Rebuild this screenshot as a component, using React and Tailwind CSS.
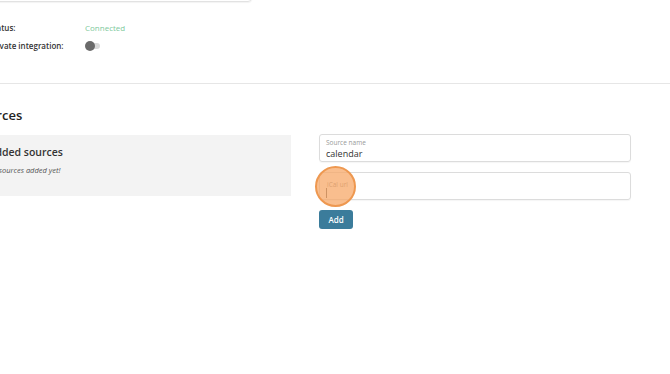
import React from 'react';

const App = () => {
  return (
    <div className="w-[670px] h-[374px] bg-white overflow-hidden text-[#333]" style={{ fontFamily: '"Open Sans", sans-serif' }}>
      {/* cut-off field at top */}
      <div className="-mt-[40px] -ml-[20px] w-[272px] h-[42px] border border-[#e2e2e2] rounded-[4px] shadow-[0_1px_1px_rgba(0,0,0,0.05)]"></div>

      <div className="-ml-[11px] mt-[20px] space-y-[7px] text-[8px]">
        <div className="flex items-center h-[11px]">
          <span className="w-[96px] font-semibold">Status:</span>
          <span className="text-[#7ec99c]">Connected</span>
        </div>
        <div className="flex items-center h-[11px]">
          <span className="w-[96px] font-semibold">Private integration:</span>
          <span className="relative w-[15px] h-[10px] flex items-center">
            <span className="absolute left-[2px] right-0 h-[6px] rounded-full bg-[#d9d9d9]"></span>
            <span className="absolute left-0 w-[10px] h-[10px] rounded-full bg-[#6a6a6a]"></span>
          </span>
        </div>
      </div>

      <div className="mt-[32px] border-t border-[#e6e6e6]"></div>

      <h2 className="-ml-[27px] mt-[22px] text-[13px] font-semibold leading-[18px] text-[#222]">Sources</h2>

      <div className="mt-[11px] flex items-start">
        <div className="-ml-[40px] w-[331px] h-[61px] bg-[#f3f3f3] pl-[16px] pt-[10px]">
          <h3 className="-ml-[4px] text-[10.5px] font-semibold leading-[15px] text-[#333]">No added sources</h3>
          <p className="mt-[5px] -ml-[21px] text-[7.5px] italic text-[#555]">There are no sources added yet!</p>
        </div>
        <div className="ml-[28px] w-[312px] -mt-[1px] flex flex-col">
          <div className="h-[28px] border border-[#dcdcdc] rounded-[3px] px-[6px] pt-[4px] shadow-[0_1px_1px_rgba(0,0,0,0.04)]">
            <div className="text-[6.5px] leading-[8px] text-[#999]">Source name</div>
            <div className="mt-[1px] text-[9px] leading-[12px] text-[#333]">calendar</div>
          </div>
          <div className="relative mt-[10px] h-[28px] border border-[#dcdcdc] rounded-[3px] px-[7px] shadow-[0_1px_1px_rgba(0,0,0,0.04)]">
            <div className="pt-[8px] text-[6.5px] leading-[8px] text-[#888]">iCal url</div>
            <div className="absolute left-[6px] top-[15px] w-px h-[10px] bg-[#555]"></div>
            <div className="absolute -left-[5px] -top-[7px] w-[41px] h-[41px] rounded-full bg-[#f7a868]/75 border-2 border-[#ee9850]"></div>
          </div>
          <button className="mt-[10px] w-[34px] h-[19px] rounded-[3px] bg-[#3b7c9b] text-white text-[8px] font-semibold">Add</button>
        </div>
      </div>
    </div>
  );
};

export default App;
